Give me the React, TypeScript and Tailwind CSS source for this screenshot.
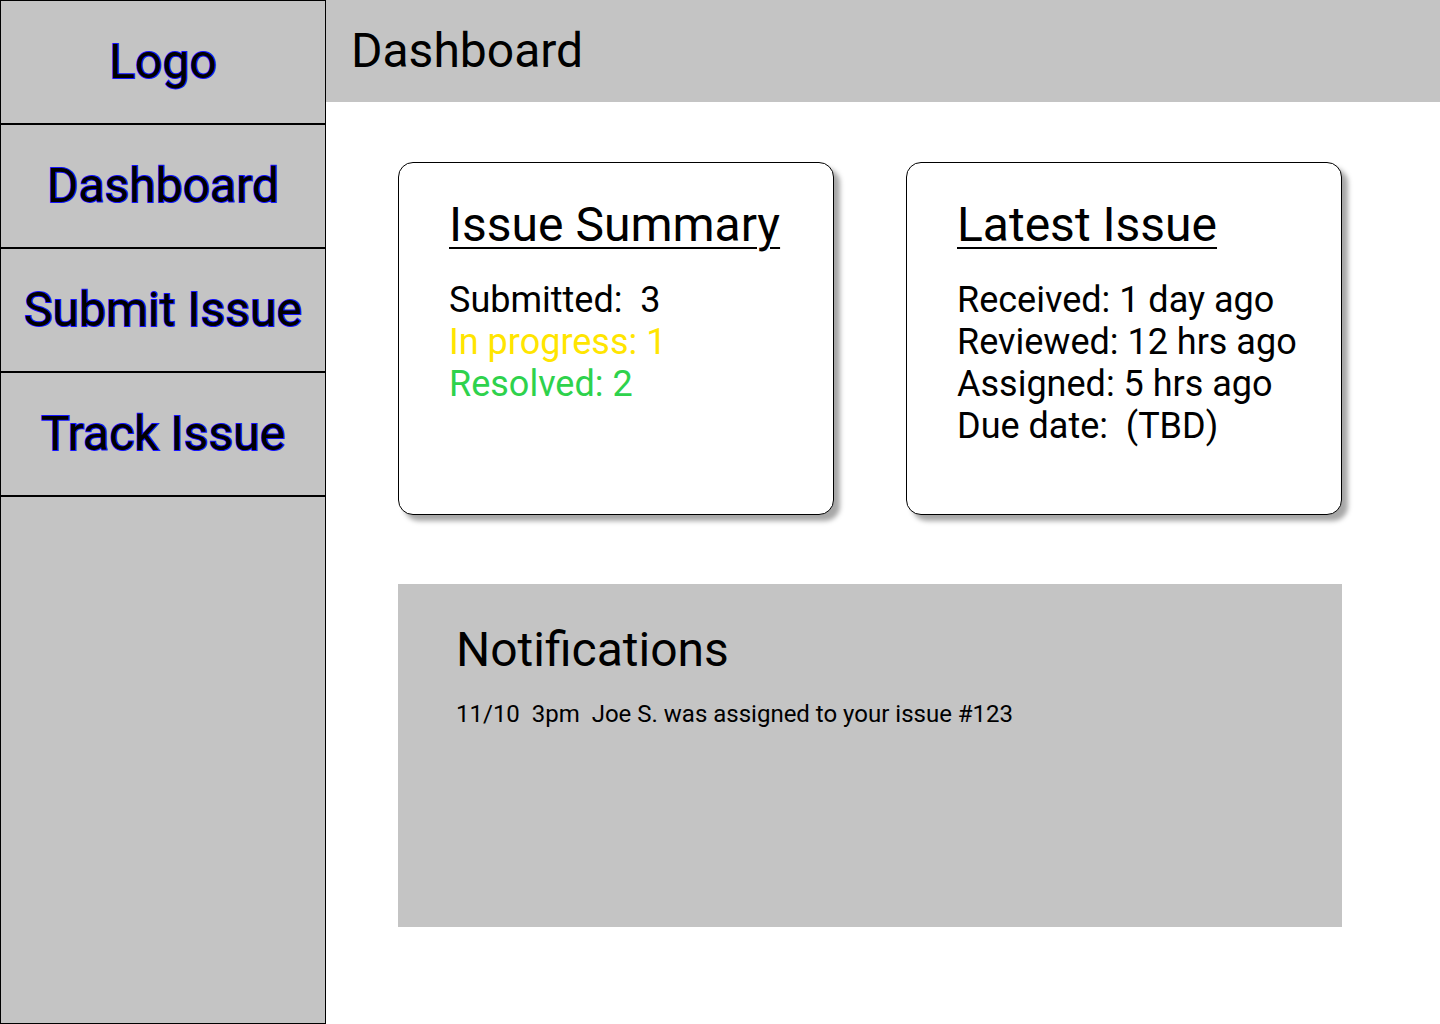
import React from 'react'

const nav = ['Logo', 'Dashboard', 'Submit Issue', 'Track Issue']

const summary = [
  { label: 'Submitted:  3', color: 'text-black' },
  { label: 'In progress: 1', color: 'text-[#ffe500]' },
  { label: 'Resolved: 2', color: 'text-[#2ed24c]' },
]

const latest = ['Received: 1 day ago', 'Reviewed: 12 hrs ago', 'Assigned: 5 hrs ago', 'Due date:  (TBD)']

function Card({ title, children }: { title: string; children: React.ReactNode }) {
  return (
    <div className="w-[436px] h-[353px] bg-white border border-black rounded-[15px] shadow-[6px_6px_5px_rgba(0,0,0,0.35)] pl-[50px] pt-[34px]">
      <h2 className="text-[48px] leading-[56px] underline underline-offset-[6px] decoration-[2px]">{title}</h2>
      <div className="mt-[26px] text-[36px] leading-[42px] whitespace-pre">{children}</div>
    </div>
  )
}

export default function App() {
  return (
    <div className="flex w-[1440px] h-[1024px] bg-white text-black font-['Roboto',sans-serif]">
      {/* Sidebar */}
      <aside className="w-[326px] h-full flex flex-col bg-[#c4c4c4] border border-black">
        {nav.map(item => (
          <div
            key={item}
            className="h-[124px] shrink-0 flex items-center justify-center border-b-2 border-black text-[48px] text-black [-webkit-text-stroke:2px_#1414ff] [paint-order:stroke_fill]"
          >
            {item}
          </div>
        ))}
      </aside>

      <main className="flex-1 flex flex-col">
        {/* Header */}
        <header className="h-[102px] bg-[#c4c4c4] flex items-center pl-[25px]">
          <h1 className="text-[48px] leading-[56px]">Dashboard</h1>
        </header>

        <div className="pl-[72px] pt-[60px]">
          <div className="flex gap-[72px]">
            <Card title="Issue Summary">
              {summary.map(s => (
                <p key={s.label} className={s.color}>{s.label}</p>
              ))}
            </Card>
            <Card title="Latest Issue">
              {latest.map(l => (
                <p key={l}>{l}</p>
              ))}
            </Card>
          </div>

          {/* Notifications */}
          <section className="mt-[69px] w-[944px] h-[343px] bg-[#c4c4c4] pl-[58px] pt-[38px]">
            <h2 className="text-[48px] leading-[56px]">Notifications</h2>
            <p className="mt-[22px] text-[24px] leading-[28px] whitespace-pre">11/10  3pm  Joe S. was assigned to your issue #123</p>
          </section>
        </div>
      </main>
    </div>
  )
}
